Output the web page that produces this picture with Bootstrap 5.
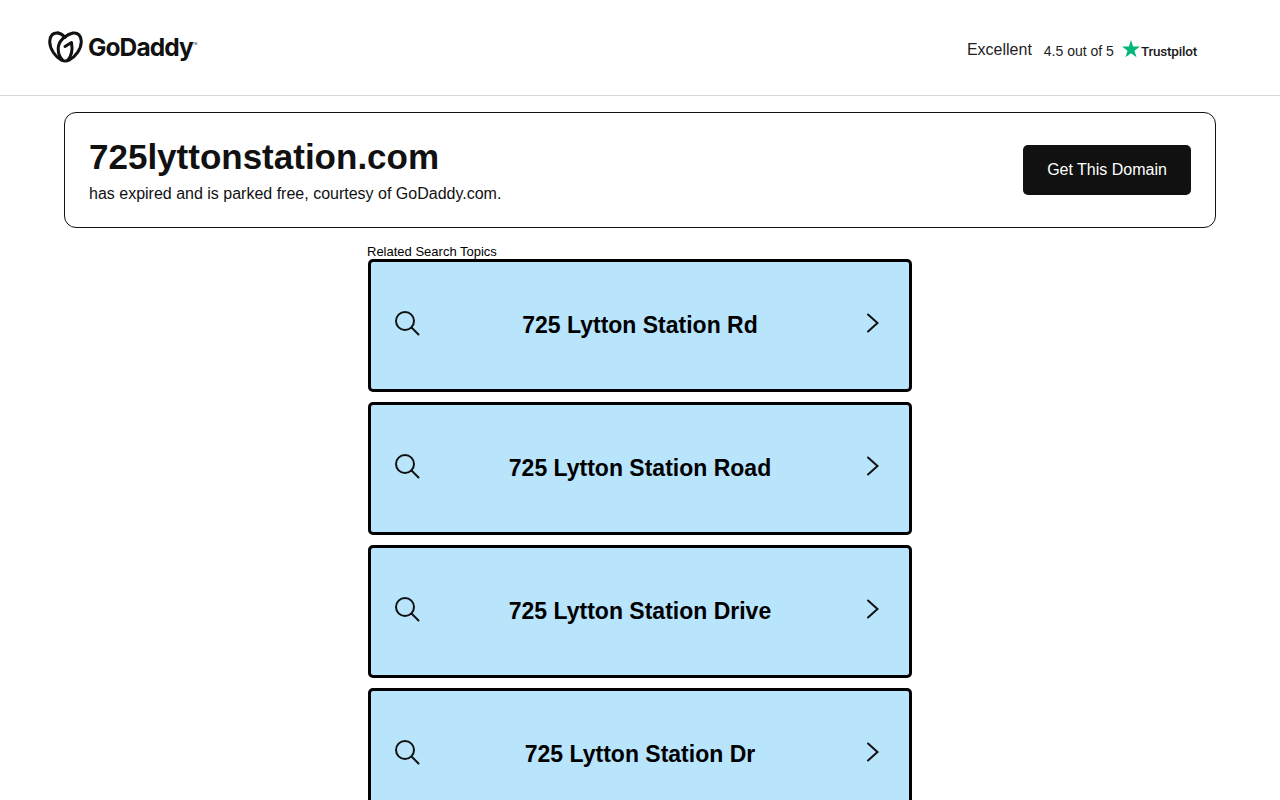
<!DOCTYPE html>
<html lang="en">
<head>
    <meta charset="UTF-8">
    <meta name="viewport" content="width=device-width, initial-scale=1.0">
    <title>725lyttonstation.com</title>
    <link href="https://cdn.jsdelivr.net/npm/bootstrap@5.3.0/dist/css/bootstrap.min.css" rel="stylesheet">
    <style>
        body { font-family: "Liberation Sans", Arial, sans-serif; color: #111; background: #fff; }
        .top-bar { height: 96px; border-bottom: 1px solid #d6d6d6; padding: 0 83px 0 48px; }
        .gd-logo { margin-top: -2px; }
        .gd-word { font-family: Inter, "Liberation Sans", sans-serif; font-weight: 700; font-size: 24.5px; letter-spacing: -.9px; line-height: 1; margin-left: 5px; color: #111; }
        .gd-tm { font-size: 3px; align-self: flex-start; margin-top: 9px; }
        .rating { margin-top: 8px; }
        .rate-excellent { font-size: 16px; color: #222; margin-right: 12px; margin-top: -3px; }
        .rate-score { font-size: 14px; color: #222; margin-right: 8px; }
        .rate-star { margin-top: -5px; }
        .tp-word { font-family: Roboto, "Liberation Sans", sans-serif; font-weight: 500; font-size: 13.5px; letter-spacing: -.2px; color: #191919; margin-left: 1px; }
        .parked-box { margin: 16px 64px 0; height: 116px; padding: 0 24px; border: 1px solid #111; border-radius: 12px; }
        .parked-domain { font-size: 35px; font-weight: 700; line-height: 44px; margin: 0 0 3px; color: #111; }
        .parked-note { font-size: 16px; line-height: 24px; margin: 0; }
        .btn-domain { width: 168px; height: 50px; background: #111; color: #fff; font-size: 16px; border: 0; border-radius: 5px; }
        .btn-domain:hover { background: #333; color: #fff; }
        .topics { width: 544px; margin: 17px auto 0; }
        .topics-title { font-size: 13px; line-height: 14px; color: #000; margin-left: -1px; }
        .topic-link { display: grid; grid-template-columns: 1fr auto 1fr; align-items: center; height: 133px; margin-bottom: 10px; padding: 0 23px; background: #b8e4fc; border: 3px solid #000; border-radius: 5px; color: #000; font-size: 23px; font-weight: 700; text-decoration: none; }
        .topic-link:hover { color: #000; }
        .topic-icon { margin-top: -5px; }
        .topic-next { justify-self: end; margin-right: 6px; }
    </style>
</head>
<body>

<header class="top-bar d-flex align-items-center justify-content-between">
    <div class="d-flex align-items-center">
        <svg class="gd-logo" width="35" height="32" viewBox="0 0 35 32" fill="none" stroke="#111" stroke-width="3" stroke-linecap="round" stroke-linejoin="round">
            <path d="M10 2C5 1.200 1.700 5 1.700 10.500c0 7.500 5.800 15.500 11.800 18.700 2.200 1 5.300 1 7.500 0C27.500 26 33.300 18 33.300 10.500 33.300 5 30 1.200 25 2 20 3 12 8 10.500 15c-1 6 1 11 4.500 14.500"/>
            <path d="M10 2c2.500.4 5 2 7 4.500"/>
            <path d="M17 15.500l6.500-4c1 5.500.5 12.500-3.500 17.500"/>
        </svg>
        <span class="gd-word">GoDaddy</span><span class="gd-tm">TM</span>
    </div>
    <div class="rating d-flex align-items-center">
        <span class="rate-excellent">Excellent</span>
        <span class="rate-score">4.5 out of 5</span>
        <svg class="rate-star" width="18" height="18" viewBox="0 0 24 24"><path fill="#00b67a" d="M12 0l2.800 8.800H24l-7.400 5.400L19.400 23 12 17.600 4.600 23l2.800-8.800L0 8.800h9.200z"/></svg>
        <span class="tp-word">Trustpilot</span>
    </div>
</header>

<section class="parked-box d-flex align-items-center justify-content-between">
    <div>
        <h1 class="parked-domain">725lyttonstation.com</h1>
        <p class="parked-note">has expired and is parked free, courtesy of GoDaddy.com.</p>
    </div>
    <a href="#" class="btn btn-domain d-flex align-items-center justify-content-center">Get This Domain</a>
</section>

<main class="topics">
    <div class="topics-title">Related Search Topics</div>
    <a href="#" class="topic-link">
        <svg class="topic-icon" width="26" height="26" viewBox="0 0 26 26" fill="none" stroke="#111" stroke-width="2" stroke-linecap="round"><circle cx="11" cy="11" r="9"/><path d="M17.500 17.500l7 7"/></svg>
        <span>725 Lytton Station Rd</span>
        <svg class="topic-icon topic-next" width="14" height="20" viewBox="0 0 14 20" fill="none" stroke="#111" stroke-width="2" stroke-linecap="round"><path d="M2 1.500l9.500 8.500-9.500 8.500"/></svg>
    </a>
    <a href="#" class="topic-link">
        <svg class="topic-icon" width="26" height="26" viewBox="0 0 26 26" fill="none" stroke="#111" stroke-width="2" stroke-linecap="round"><circle cx="11" cy="11" r="9"/><path d="M17.500 17.500l7 7"/></svg>
        <span>725 Lytton Station Road</span>
        <svg class="topic-icon topic-next" width="14" height="20" viewBox="0 0 14 20" fill="none" stroke="#111" stroke-width="2" stroke-linecap="round"><path d="M2 1.500l9.500 8.500-9.500 8.500"/></svg>
    </a>
    <a href="#" class="topic-link">
        <svg class="topic-icon" width="26" height="26" viewBox="0 0 26 26" fill="none" stroke="#111" stroke-width="2" stroke-linecap="round"><circle cx="11" cy="11" r="9"/><path d="M17.500 17.500l7 7"/></svg>
        <span>725 Lytton Station Drive</span>
        <svg class="topic-icon topic-next" width="14" height="20" viewBox="0 0 14 20" fill="none" stroke="#111" stroke-width="2" stroke-linecap="round"><path d="M2 1.500l9.500 8.500-9.500 8.500"/></svg>
    </a>
    <a href="#" class="topic-link">
        <svg class="topic-icon" width="26" height="26" viewBox="0 0 26 26" fill="none" stroke="#111" stroke-width="2" stroke-linecap="round"><circle cx="11" cy="11" r="9"/><path d="M17.500 17.500l7 7"/></svg>
        <span>725 Lytton Station Dr</span>
        <svg class="topic-icon topic-next" width="14" height="20" viewBox="0 0 14 20" fill="none" stroke="#111" stroke-width="2" stroke-linecap="round"><path d="M2 1.500l9.500 8.500-9.500 8.500"/></svg>
    </a>
</main>

<script src="https://cdn.jsdelivr.net/npm/bootstrap@5.3.0/dist/js/bootstrap.bundle.min.js"></script>
</body>
</html>
